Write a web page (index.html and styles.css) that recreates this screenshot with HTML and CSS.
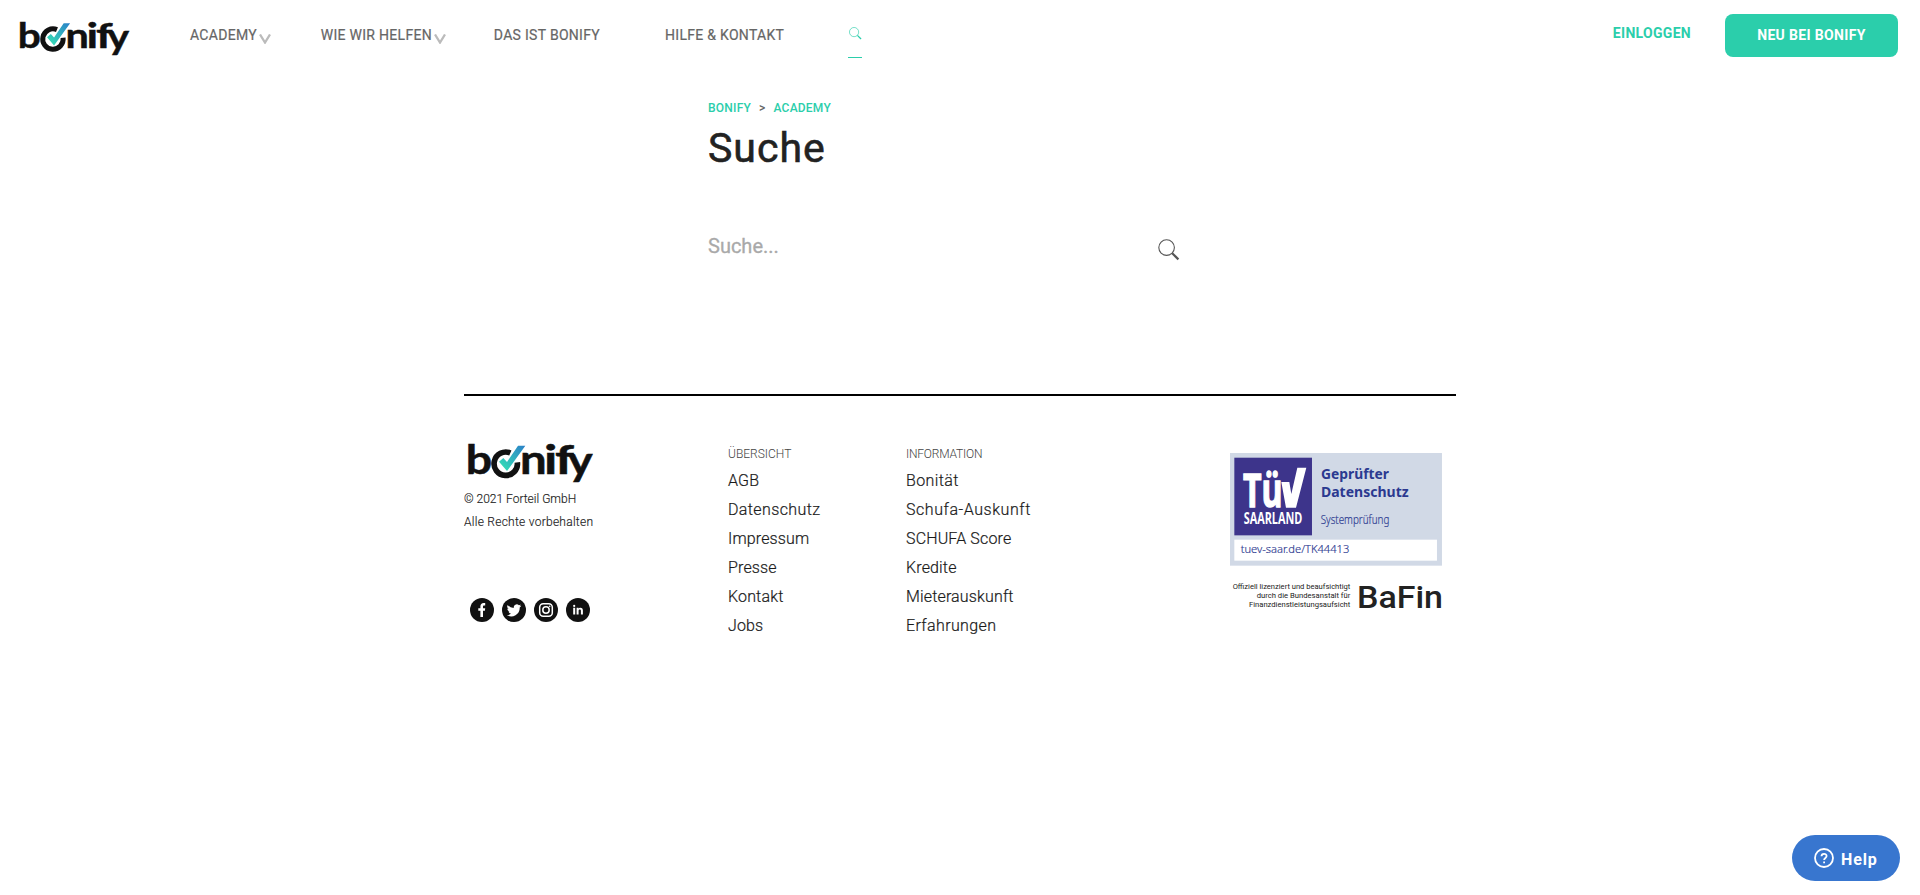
FILE: index.html
```html
<!DOCTYPE html>
<html lang="de">
<head>
<meta charset="utf-8">
<title>Suche | bonify</title>
<link rel="stylesheet" href="styles.css">
</head>
<body>
<svg class="defs" width="0" height="0">
  <defs>
    <linearGradient id="tick" x1="0" y1="1" x2="1" y2="0"><stop offset="0.1" stop-color="#35dcb6"/><stop offset="1" stop-color="#2b7fc8"/></linearGradient>
    <symbol id="logo" viewBox="50 185 380 128">
      <g class="wordmark">
        <text x="46" y="282" textLength="79" lengthAdjust="spacingAndGlyphs">b</text>
        <text x="209" y="282" textLength="80" lengthAdjust="spacingAndGlyphs">n</text>
        <text x="281" y="282" textLength="40" lengthAdjust="spacingAndGlyphs">i</text>
        <text x="314" y="282" textLength="57" lengthAdjust="spacingAndGlyphs">f</text>
        <text x="353" y="284" textLength="74" lengthAdjust="spacingAndGlyphs">y</text>
      </g>
      <path d="M180 218A35 35 0 1 0 201 246" fill="none" stroke="#111" stroke-width="17"/>
      <path d="M146 244L159 233L170 245L203 196H225L170 272Z" fill="url(#tick)"/>
    </symbol>
    <symbol id="glass" viewBox="0 0 22 22">
      <circle cx="8.6" cy="8.6" r="7.8" fill="none" stroke="currentColor" stroke-width="1.1"/>
      <path d="M14.2 14.2L20.4 20.4" stroke="currentColor" stroke-width="2.2"/>
    </symbol>
  </defs>
</svg>
<header class="header">
  <svg class="header-logo"><use href="#logo"/></svg>
  <nav class="nav">
    <a>ACADEMY</a><svg class="chev" viewBox="0 0 12 10"><path d="M1 0.500L6 8.500L11 0.500"/></svg>
    <a class="nav-b">WIE WIR HELFEN</a><svg class="chev" viewBox="0 0 12 10"><path d="M1 0.500L6 8.500L11 0.500"/></svg>
    <a class="nav-c">DAS IST BONIFY</a>
    <a class="nav-d">HILFE &amp; KONTAKT</a>
    <span class="nav-search"><svg><use href="#glass"/></svg></span>
  </nav>
  <a class="login">EINLOGGEN</a>
  <a class="signup">NEU BEI BONIFY</a>
</header>
<main class="main">
  <div class="crumbs"><a>BONIFY</a><span class="sep">&gt;</span><a>ACADEMY</a></div>
  <h1>Suche</h1>
  <div class="search"><span>Suche...</span><svg><use href="#glass"/></svg></div>
</main>
<footer class="footer">
  <div class="company">
    <svg class="footer-logo"><use href="#logo"/></svg>
    <p>© 2021 Forteil GmbH</p>
    <p class="rights">Alle Rechte vorbehalten</p>
    <div class="social">
      <svg viewBox="0 0 24 24"><circle cx="12" cy="12" r="12"/><path class="ink" d="M10.400 19v-6.200H8.300v-2.500h2.100V8.500C10.400 6.300 11.600 5 13.700 5h1.500v2.500h-1.100c-.8 0-1.100.4-1.100 1.100v1.700h2.200l-.3 2.500H13V19z"/></svg>
      <svg viewBox="0 0 24 24"><circle cx="12" cy="12" r="12"/><path class="ink" d="M19.200 7.700c-.5.300-1.100.4-1.700.5.600-.4 1.100-1 1.300-1.600-.6.300-1.200.6-1.900.7a3 3 0 0 0-5.100 2.700A8.400 8.400 0 0 1 5.700 6.900a3 3 0 0 0 .9 4c-.5 0-.9-.1-1.300-.4 0 1.500 1 2.700 2.400 3-.4.100-.9.100-1.300 0 .4 1.200 1.500 2.100 2.800 2.100A6 6 0 0 1 4.800 17 8.400 8.400 0 0 0 17.700 9.500c.6-.5 1.100-1.100 1.500-1.800z"/></svg>
      <svg viewBox="0 0 24 24"><circle cx="12" cy="12" r="12"/><rect class="line" x="5.700" y="5.700" width="12.600" height="12.600" rx="3.500"/><circle class="line" cx="12" cy="12" r="3.200"/><circle class="ink" cx="15.700" cy="8.300" r=".8"/></svg>
      <svg viewBox="0 0 24 24"><circle cx="12" cy="12" r="12"/><path class="ink" d="M7.200 9.800h2V16.500h-2zM10.600 9.800h1.900v.9c.9-1.600 4.400-1.500 4.400 1.600v4.200h-2v-3.700c0-1.700-2.300-1.600-2.300 0v3.700h-2z"/><circle class="ink" cx="8.200" cy="7.900" r="1.100"/></svg>
    </div>
  </div>
  <div class="links">
    <h2>ÜBERSICHT</h2>
    <a>AGB</a><a class="wide">Datenschutz</a><a>Impressum</a><a>Presse</a><a>Kontakt</a><a>Jobs</a>
  </div>
  <div class="links links-info">
    <h2>INFORMATION</h2>
    <a class="wide">Bonität</a><a class="widest">Schufa-Auskunft</a><a>SCHUFA Score</a><a>Kredite</a><a>Mieterauskunft</a><a class="wide">Erfahrungen</a>
  </div>
  <svg class="seals" viewBox="60 220 640 470">
    <rect x="60" y="220" width="636" height="338" fill="#d1d9e6"/>
    <rect x="73" y="234" width="233" height="233" fill="#3d348b"/>
    <rect x="73" y="480" width="608" height="63" fill="#fff"/>
    <g class="tuv">
      <text class="tuv-big" x="99" y="383" textLength="119" lengthAdjust="spacingAndGlyphs" font-size="142">Tü</text>
      <path d="M214 307H238L244 343L262 264H289L258 384H228Z"/>
      <text x="101" y="432" textLength="176" lengthAdjust="spacingAndGlyphs" font-size="46">SAARLAND</text>
    </g>
    <g class="seal-text">
      <text x="333" y="299" textLength="204" lengthAdjust="spacingAndGlyphs" font-size="45" font-weight="700">Geprüfter</text>
      <text x="333" y="353" textLength="263" lengthAdjust="spacingAndGlyphs" font-size="45" font-weight="700">Datenschutz</text>
      <text class="seal-small" x="332" y="434" textLength="206" lengthAdjust="spacingAndGlyphs" font-size="38">Systemprüfung</text>
      <text class="seal-small" x="92" y="521" textLength="326" lengthAdjust="spacingAndGlyphs" font-size="34">tuev-saar.de/TK44413</text>
    </g>
    <g class="bafin">
      <text x="68" y="629" textLength="353" lengthAdjust="spacingAndGlyphs" font-size="19">Offiziell lizenziert und beaufsichtigt</text>
      <text x="140" y="655" textLength="281" lengthAdjust="spacingAndGlyphs" font-size="19">durch die Bundesanstalt für</text>
      <text x="117" y="681" textLength="304" lengthAdjust="spacingAndGlyphs" font-size="19">Finanzdienstleistungsaufsicht</text>
      <text x="441" y="684" textLength="258" lengthAdjust="spacingAndGlyphs" font-size="93" font-weight="500">BaFin</text>
    </g>
  </svg>
</footer>
<a class="help"><svg viewBox="0 0 20 20"><circle cx="10" cy="10" r="9"/><path d="M7.500 8.200C7.500 5 12.600 5 12.600 8.100C12.600 10 10.100 9.900 10.100 12"/><path d="M10.100 13.500V15.200"/></svg><span>Help</span></a>
</body>
</html>
```
FILE: styles.css
```css
* { box-sizing: border-box; }
body { margin: 0; background: #fff; color: #222; font-family: Roboto, "Liberation Sans", sans-serif; }
.defs { position: absolute; }
.wordmark { font-family: Lato, sans-serif; font-weight: 700; font-size: 118px; fill: #111; stroke: #111; stroke-width: 1.500; }
.header { display: flex; height: 70px; padding-left: 19px; padding-right: 22px; }
.header-logo { width: 111px; height: 37.400px; margin-top: 20.300px; flex: none; overflow: visible; }
.nav { display: flex; height: 70px; align-items: center; margin-left: 60px; font-size: 14px; letter-spacing: 0.300px; color: #666; white-space: nowrap; -webkit-text-stroke: 0.200px #666; }
.nav-b { margin-left: 50.200px; }
.nav-c { margin-left: 48.300px; }
.nav-d { margin-left: 65px; }
.chev { width: 12px; height: 10px; margin: 8px 0 0 1.500px; fill: none; stroke: #bbb; stroke-width: 2.300; }
.nav-search { width: 14px; height: 32px; margin: 14px 0 0 64px; border-bottom: 1px solid #2bceab; color: #2bceab; }
.nav-search svg { width: 13px; height: 13px; display: block; margin: 1px 0 0 1px; }
.login { margin-left: auto; margin-top: 24px; font-size: 14px; line-height: 18px; font-weight: 700; letter-spacing: 0.300px; color: #2bceab; }
.signup { width: 173px; height: 43px; margin: 14px 0 0 34px; border-radius: 8px; background: #2bceab; color: #fff; font-size: 14px; font-weight: 700; letter-spacing: 0.350px; line-height: 43px; text-align: center; }
.main { width: 504px; margin-left: 708px; padding-top: 28px; }
.crumbs { display: flex; font-size: 12px; line-height: 20px; font-weight: 500; letter-spacing: 0.220px; color: #2bceab; }
.sep { color: #666; margin: 0 8px; }
h1 { margin: 5px 0 0; font-size: 41px; line-height: 50px; font-weight: 400; letter-spacing: 1px; -webkit-text-stroke: 0.600px #222; }
.search { display: flex; margin-top: 58px; height: 30px; width: 472px; justify-content: space-between; font-size: 20px; line-height: 30px; color: #a9a9a9; }
.search span { -webkit-text-stroke: 0.300px #a9a9a9; }
.search svg { width: 22px; height: 22px; margin-top: 8px; color: #555; }
.footer { display: flex; width: 992px; margin: 133px auto 0; border-top: 2px solid #000; font-weight: 300; }
.company { width: 264px; padding-top: 46px; }
.footer-logo { display: block; width: 126.700px; height: 42.700px; margin: 0 0 3.300px 2.700px; overflow: visible; }
.company p { margin: 0; font-size: 12px; line-height: 23px; -webkit-text-stroke: 0.150px #222; }
.company .rights { letter-spacing: 0.260px; }
.social { display: flex; gap: 8px; margin: 64px 0 0 6px; }
.social svg { width: 24px; height: 24px; fill: #111; }
.social .ink { fill: #fff; }
.social .line { fill: none; stroke: #fff; stroke-width: 1.500; }
.links { width: 178px; padding-top: 48px; }
.links h2 { margin: 0 0 2px; font-size: 12px; line-height: 20px; font-weight: 300; color: #444; }
.links-info h2 { letter-spacing: -0.200px; }
.links a { display: block; font-size: 16px; line-height: 29px; letter-spacing: 0.150px; color: #1a1a1a; -webkit-text-stroke: 0.200px #1a1a1a; }
.links .wide { letter-spacing: 0.380px; }
.links .widest { letter-spacing: 0.560px; }
.links-info { width: 324px; }
.seals { width: 213.300px; height: 156.700px; margin-top: 57.300px; flex: none; overflow: visible; }
.tuv { fill: #fff; font-family: "Open Sans", sans-serif; font-weight: 700; }
.tuv-big { stroke: #fff; stroke-width: 4; }
.seal-text { fill: #2b3990; font-family: "Noto Sans", sans-serif; }
.seal-small { stroke: #2b3990; stroke-width: 0.500; }
.bafin { fill: #222; font-weight: 400; }
.help { position: fixed; left: 1792px; top: 835px; width: 108px; height: 46px; border-radius: 23px; background: #3876cf; color: #fff; display: flex; align-items: center; padding-left: 22px; font-size: 16px; font-weight: 700; letter-spacing: 0.900px; }
.help svg { width: 20px; height: 20px; fill: none; stroke: #fff; stroke-width: 1.800; margin-right: 7px; }
.help span { padding-top: 2px; }
```
